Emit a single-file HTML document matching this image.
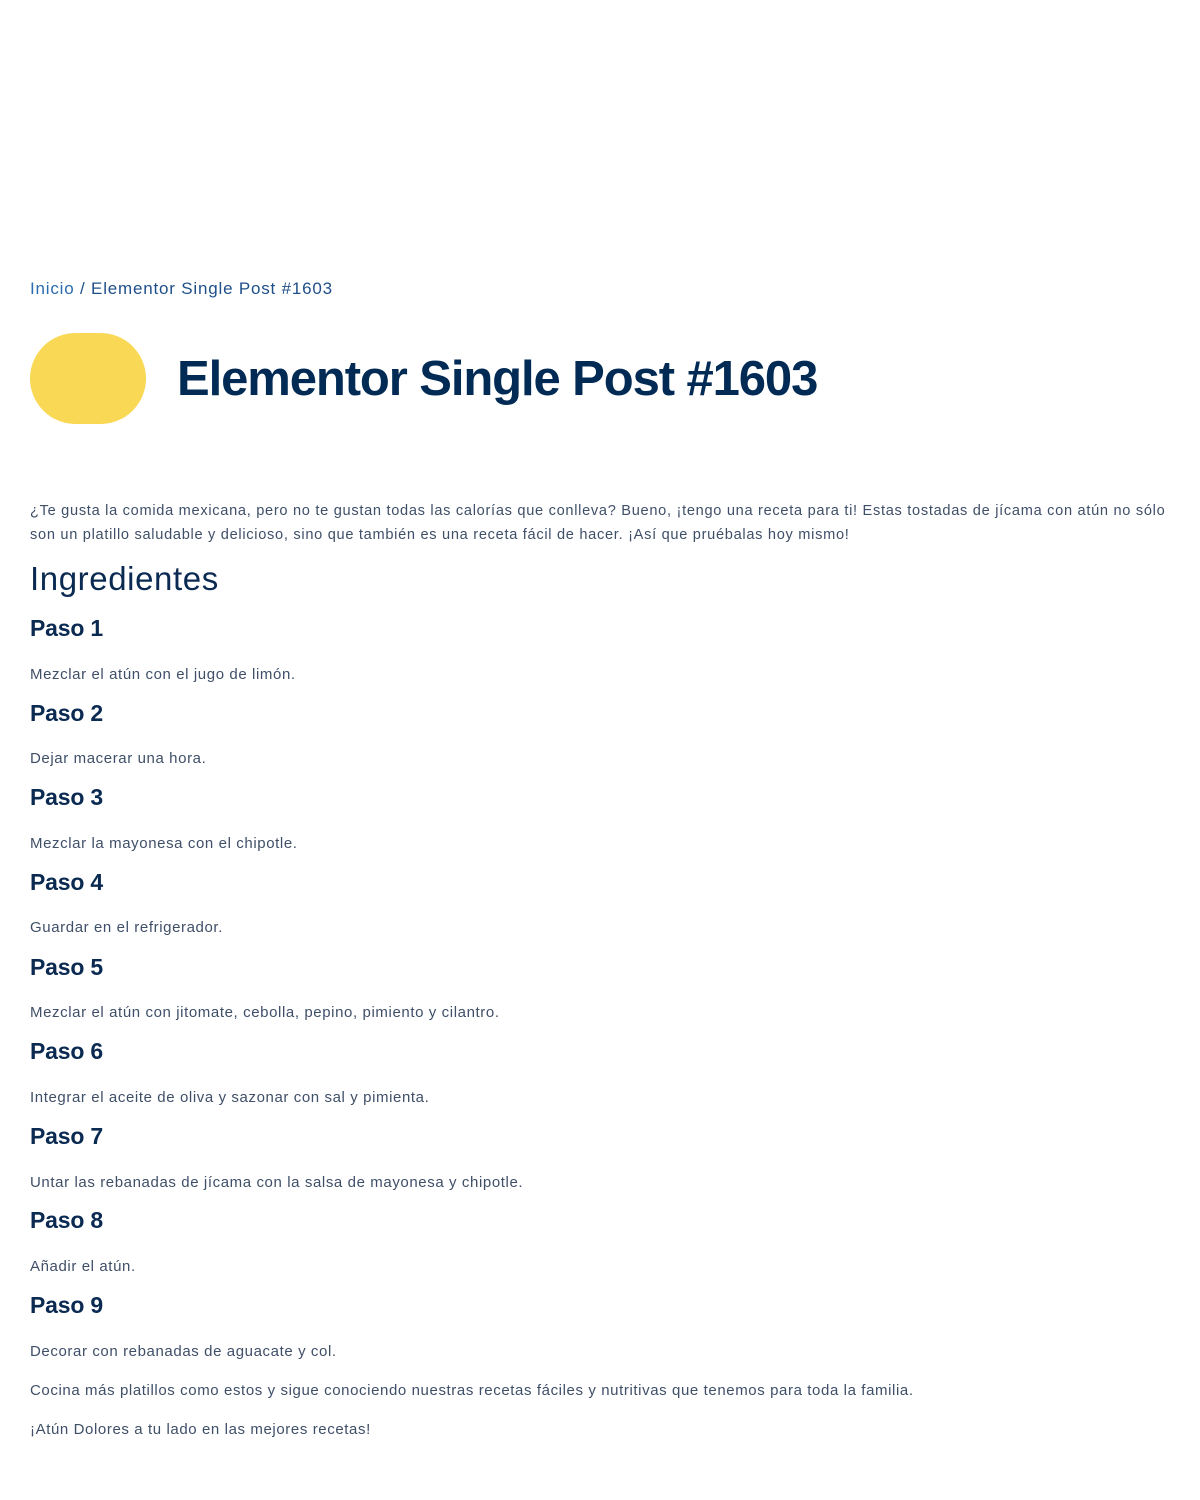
<!DOCTYPE html>
<html><head><meta charset="utf-8"><style>
body{margin:0;width:1200px;height:1500px;background:#fff;font-family:"Liberation Sans",sans-serif;position:relative;overflow:hidden}
.a{position:absolute;left:30px;white-space:nowrap;line-height:20px}
.p{color:#3f4f68;font-size:15px;letter-spacing:0.6px;margin-top:2px}
.h{color:#0a2a52;font-size:23px;font-weight:bold;line-height:30px;letter-spacing:-0.2px}
</style></head><body>
<div class="a" style="top:279px;font-size:17px;color:#2b6cb0;letter-spacing:0.8px">Inicio <span style="color:#1f4f8a">/ Elementor Single Post #1603</span></div>
<div style="position:absolute;left:30px;top:333px;width:116px;height:91px;border-radius:46px;background:#f8d854"></div>
<div class="a" style="left:177px;top:349px;font-size:49px;font-weight:bold;color:#012a54;line-height:60px;letter-spacing:-1.1px">Elementor Single Post #1603</div>
<div class="a p" style="top:497px;line-height:24px;font-size:14.6px;letter-spacing:0.7px">¿Te gusta la comida mexicana, pero no te gustan todas las calorías que conlleva? Bueno, ¡tengo una receta para ti! Estas tostadas de jícama con atún no sólo<br>son un platillo saludable y delicioso, sino que también es una receta fácil de hacer. ¡Así que pruébalas hoy mismo!</div>
<div class="a" style="top:559px;font-size:33px;color:#0a2a52;line-height:40px;letter-spacing:0.6px">Ingredientes</div>
<div class="a h" style="top:613px">Paso 1</div><div class="a p" style="top:663px">Mezclar el atún con el jugo de limón.</div>
<div class="a h" style="top:698px">Paso 2</div><div class="a p" style="top:747px">Dejar macerar una hora.</div>
<div class="a h" style="top:782px">Paso 3</div><div class="a p" style="top:832px">Mezclar la mayonesa con el chipotle.</div>
<div class="a h" style="top:867px">Paso 4</div><div class="a p" style="top:916px">Guardar en el refrigerador.</div>
<div class="a h" style="top:952px">Paso 5</div><div class="a p" style="top:1001px">Mezclar el atún con jitomate, cebolla, pepino, pimiento y cilantro.</div>
<div class="a h" style="top:1036px">Paso 6</div><div class="a p" style="top:1086px">Integrar el aceite de oliva y sazonar con sal y pimienta.</div>
<div class="a h" style="top:1121px">Paso 7</div><div class="a p" style="top:1171px">Untar las rebanadas de jícama con la salsa de mayonesa y chipotle.</div>
<div class="a h" style="top:1205px">Paso 8</div><div class="a p" style="top:1255px">Añadir el atún.</div>
<div class="a h" style="top:1290px">Paso 9</div><div class="a p" style="top:1340px">Decorar con rebanadas de aguacate y col.</div>
<div class="a p" style="top:1379px">Cocina más platillos como estos y sigue conociendo nuestras recetas fáciles y nutritivas que tenemos para toda la familia.</div>
<div class="a p" style="top:1418px">¡Atún Dolores a tu lado en las mejores recetas!</div>
</body></html>
